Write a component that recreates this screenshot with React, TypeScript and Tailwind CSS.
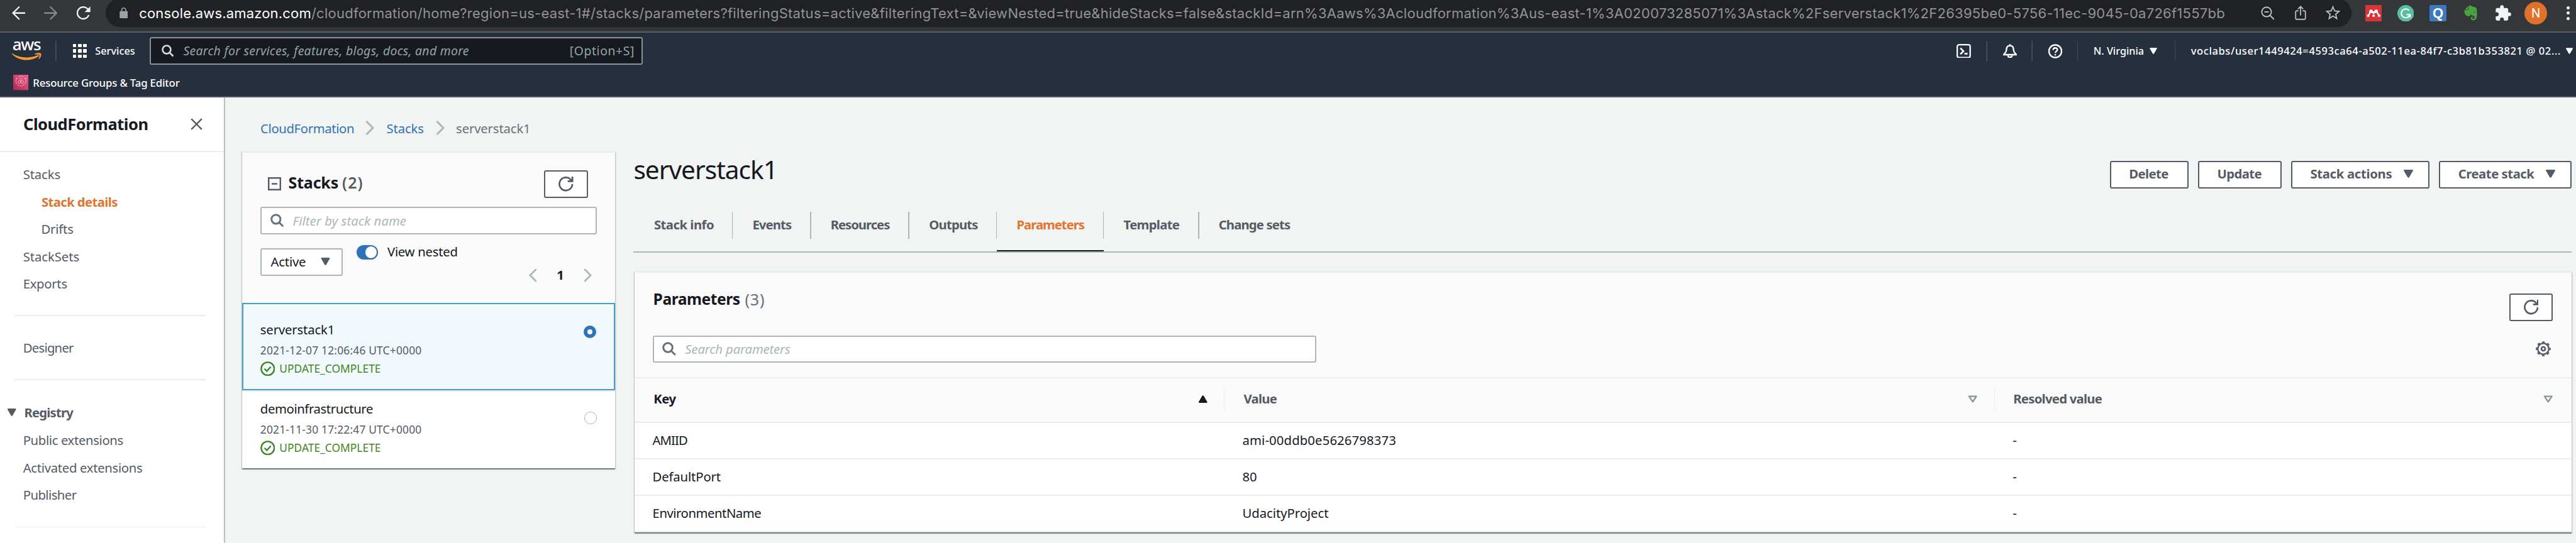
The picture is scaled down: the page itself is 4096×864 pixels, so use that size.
import type { ReactNode } from "react";
import { FaEvernote } from "react-icons/fa";
import { MdExtension, MdStarBorder } from "react-icons/md";

const URL_PATH =
  "/cloudformation/home?region=us-east-1#/stacks/parameters?filteringStatus=active&filteringText=&viewNested=true&hideStacks=false&stackId=arn%3Aaws%3Acloudformation%3Aus-east-1%3A020073285071%3Astack%2Fserverstack1%2F26395be0-5756-11ec-9045-0a726f1557bb";

function Caret({ className }: { className: string }) {
  return (
    <svg viewBox="0 0 16 14" className={className} fill="currentColor">
      <path d="M1.5 0h13c1.2 0 1.9 1 1.3 2l-6.4 11c-.6 1-2.200 1-2.800 0L.2 2C-.4 1 .3 0 1.500 0z" />
    </svg>
  );
}

function SearchIcon({ className }: { className: string }) {
  return (
    <svg viewBox="0 0 22 22" className={className} fill="none" stroke="currentColor" strokeWidth="3">
      <circle cx="9" cy="9" r="7.300" />
      <path d="M14.200 14.200l6.600 6.600" />
    </svg>
  );
}

function RefreshIcon({ className }: { className: string }) {
  return (
    <svg viewBox="0 0 28 28" className={className} fill="none" stroke="currentColor" strokeWidth="3.200">
      <path d="M26.300 14A12.300 12.300 0 1 1 23.500 6.200l2 2.300" />
      <path d="M26.400 0v8.700H17.600" />
    </svg>
  );
}

function Chevron({ className, flip = false }: { className: string; flip?: boolean }) {
  return (
    <svg viewBox="0 0 14 23" className={className} fill="none" stroke="currentColor" strokeWidth="3">
      {flip ? <path d="M12.500 1L2 11.500 12.500 22" /> : <path d="M1.500 1L12 11.500 1.500 22" />}
    </svg>
  );
}

function BrowserBar() {
  return (
    <div className="flex h-[52px] w-full items-start overflow-hidden border-b-2 border-[#5f6064] bg-[#35363a]">
      <div className="-mt-[1.6px] flex h-[45px] w-full shrink-0 items-center">
        <svg viewBox="0 0 26 26" className="ml-[18.500px] size-[21.500px] shrink-0" fill="none" stroke="#f1f3f4" strokeWidth="2.800" strokeLinecap="round">
          <path d="M25 13H2M13.500 1.500L2 13l11.500 11.500" />
        </svg>
        <svg viewBox="0 0 26 26" className="ml-[30px] size-[21.500px] shrink-0" fill="none" stroke="#87888b" strokeWidth="2.800" strokeLinecap="round">
          <path d="M1 13h23M12.500 1.500L24 13 12.500 24.500" />
        </svg>
        <svg viewBox="0 0 28 27" className="ml-[30px] h-[21.500px] w-[22px] shrink-0">
          <path d="M24.500 17.500A12 12 0 1 1 22.500 5.500" fill="none" stroke="#f1f3f4" strokeWidth="2.900" />
          <path d="M27.500 0v11.500H16z" fill="#f1f3f4" />
        </svg>
        <div className="ml-[24.200px] flex h-[45px] w-[3571px] shrink-0 items-center rounded-full bg-[#202124]">
          <svg viewBox="0 0 16 21" className="ml-[22px] h-[17px] w-[13.500px] shrink-0">
            <path d="M4 8V5a4 4 0 0 1 8 0v3" fill="none" stroke="#9aa0a6" strokeWidth="2" />
            <rect x="0" y="7" width="16" height="14" rx="1.800" fill="#9aa0a6" />
          </svg>
          <div className="ml-[18px] flex w-[3362px] shrink-0 whitespace-nowrap font-['Inter',sans-serif] text-[22px] leading-[28px] tracking-[0.255px] text-white">
            <span className="tracking-[0.180px]">console.aws.amazon.com</span>
            <span className="text-[#929395]">{URL_PATH}</span>
          </div>
          <svg viewBox="0 0 27 27" className="ml-[12px] size-[22px] shrink-0" fill="none" stroke="#b9babc" strokeWidth="2.500">
            <circle cx="11" cy="11" r="9.300" />
            <path d="M17.500 17.500l8 8M6.800 11h8.400" />
          </svg>
          <svg viewBox="0 0 22 28" className="ml-[32px] h-[23px] w-[18px] shrink-0" fill="none" stroke="#b9babc" strokeWidth="2.300">
            <path d="M7 10H3.500A2 2 0 0 0 1.500 12v12.500a2 2 0 0 0 2 2h15a2 2 0 0 0 2-2V12a2 2 0 0 0-2-2H15M11 19V2M6 6.500L11 1.500l5 5" />
          </svg>
          <MdStarBorder className="ml-[27.500px] size-[29px] shrink-0 text-[#b9babc]" />
        </div>
        <svg viewBox="0 0 32 32" className="ml-[22px] size-[26.500px] shrink-0">
          <rect width="32" height="32" fill="#d63638" />
          <g fill="#fff">
            <circle cx="11" cy="12" r="3.300" />
            <circle cx="21" cy="12" r="3.300" />
            <circle cx="16" cy="14.500" r="2.600" />
            <circle cx="5.500" cy="20.500" r="2.500" />
            <circle cx="16" cy="20.500" r="2.500" />
            <circle cx="26.500" cy="20.500" r="2.500" />
          </g>
          <path d="M9.500 12Q9 17 5.500 20M11 13l5 2 5-2M22.500 12q.5 5 4 8" fill="none" stroke="#fff" strokeWidth="2.600" />
        </svg>
        <svg viewBox="0 0 32 32" className="ml-[24.500px] size-[26.500px] shrink-0">
          <circle cx="16" cy="16" r="16" fill="#58c09b" />
          <path d="M22.500 10.500A8.500 8.500 0 1 0 23.500 20M17.500 18.500h7v5.500" fill="none" stroke="#fff" strokeWidth="2.500" />
        </svg>
        <div className="ml-[25px] flex size-[26.500px] shrink-0 items-center justify-center rounded-[2px] bg-[#3d7abd] font-['Liberation_Sans',sans-serif] text-[22px] leading-none font-bold text-white">
          Q
        </div>
        <FaEvernote className="ml-[25px] h-[27px] w-[27px] shrink-0 text-[#4aa33e]" />
        <MdExtension className="ml-[24px] size-[28px] shrink-0 text-[#f1f3f4]" />
        <div className="ml-[20.500px] flex size-[36px] shrink-0 items-center justify-center rounded-full bg-[#e0712a] font-['Roboto',sans-serif] text-[20px] leading-none text-white">
          N
        </div>
        <div className="ml-[30.500px] flex shrink-0 flex-col gap-[3.500px]">
          <span className="size-[5px] rounded-full bg-[#f1f3f4]" />
          <span className="size-[5px] rounded-full bg-[#f1f3f4]" />
          <span className="size-[5px] rounded-full bg-[#f1f3f4]" />
        </div>
      </div>
    </div>
  );
}

function NavDivider({ className }: { className: string }) {
  return <span className={`h-[32px] w-[1.500px] shrink-0 bg-[#434a54] ${className}`} />;
}

function ConsoleNav() {
  return (
    <div className="h-[103px] w-full border-b-2 border-[#545b64] bg-[#262f3e] font-medium text-white">
      <div className="flex h-[58px] items-center">
        <div className="ml-[18.500px] flex w-[47px] shrink-0 flex-col items-center">
          <span className="h-[17px] text-[26px] leading-[7px] tracking-[-1.300px]">aws</span>
          <svg viewBox="0 0 175 44" className="h-[12px] w-[47px]" fill="#f59b35">
            <path d="M1 3C50 32 105 34 154 14c6-2 9 2 4 6C112 54 42 50 1 8c-3-3-2-6 0-5z" />
            <path d="M136 6c12-7 32-7 36-2 4 6-1 24-11 32-2 1-4 0-3-2 4-9 7-19 5-22-3-3-13-3-24-1-3 0-5-3-3-5z" />
          </svg>
        </div>
        <NavDivider className="ml-[22.500px]" />
        <div className="ml-[26px] grid w-[22.500px] shrink-0 grid-cols-3 gap-[2.700px]">
          {[0, 1, 2, 3, 4, 5, 6, 7, 8].map((n) => (
            <span key={n} className="h-[5.700px] rounded-[1px] bg-white" />
          ))}
        </div>
        <span className="ml-[13.300px] w-[65px] shrink-0 text-[16.300px]">Services</span>
        <div className="ml-[22.200px] flex h-[43.500px] w-[783.500px] shrink-0 items-center rounded-[3px] border-2 border-[#879596] bg-[#16191f] font-normal text-[#95a5a6]">
          <SearchIcon className="ml-[16.500px] size-[19.500px] shrink-0 text-[#d5dbdb]" />
          <span className="ml-[15px] grow text-[19.400px] tracking-[0.300px] italic">
            Search for services, features, blogs, docs, and more
          </span>
          <span className="mr-[11px] text-[19.400px] tracking-[0.590px]">[Option+S]</span>
        </div>
        <div className="grow" />
        <svg viewBox="0 0 28 28" className="size-[22.800px] shrink-0" fill="none" stroke="#fff" strokeWidth="2.800">
          <rect x="1.400" y="1.400" width="25.200" height="25.200" rx="3.500" />
          <path d="M7.500 8l6 6-6 6" strokeWidth="3.200" />
          <path d="M15.500 19h6" strokeWidth="3.400" />
        </svg>
        <NavDivider className="ml-[24px]" />
        <svg viewBox="0 0 30 28" className="ml-[24px] h-[22.800px] w-[24px] shrink-0" fill="none" stroke="#fff" strokeWidth="3" strokeLinejoin="round">
          <path d="M15 3c-5 0-7 3.500-7 8 0 5-2.500 6-5.500 10h25C24.500 17 22 16 22 11c0-4.500-2-8-7-8z" />
          <path d="M15 0v4M11 22.500c0 5 8 5 8 0" />
        </svg>
        <NavDivider className="ml-[22.500px]" />
        <svg viewBox="0 0 30 28" className="ml-[24.500px] h-[23px] w-[24px] shrink-0" fill="none" stroke="#fff" strokeWidth="2.900">
          <circle cx="15" cy="14" r="12.500" />
          <path d="M10.800 11.500c0-5.500 8.400-5.200 8.400-.5 0 3.200-4.200 3-4.200 6.500M15 19.500v3" />
        </svg>
        <NavDivider className="ml-[22.500px]" />
        <span className="ml-[24.500px] w-[82px] shrink-0 text-[16.200px] whitespace-nowrap">N. Virginia</span>
        <Caret className="ml-[7.500px] h-[10px] w-[12px] shrink-0" />
        <NavDivider className="ml-[27.500px]" />
        <span className="ml-[24.500px] w-[586.500px] shrink-0 text-[16.500px] tracking-[0.600px] whitespace-nowrap">
          voclabs/user1449424=4593ca64-a502-11ea-84f7-c3b81b353821 @ 02...
        </span>
        <Caret className="mr-[5.300px] ml-[9.500px] h-[10px] w-[11px] shrink-0" />
      </div>
      <div className="flex h-[43px] items-center">
        <svg viewBox="0 0 30 30" className="ml-[20.700px] size-[24.300px]">
          <defs>
            <linearGradient id="rg" x1="0" y1="1" x2="1" y2="0">
              <stop offset="0" stopColor="#b0264f" />
              <stop offset="1" stopColor="#f0608f" />
            </linearGradient>
          </defs>
          <rect width="30" height="30" fill="url(#rg)" />
          <g fill="none" stroke="#f7c3d4" strokeWidth=".9">
            <path d="M7 6.500A9.600 9.600 0 0 0 13 21.500l2 1.500 2-1.500A9.600 9.600 0 0 0 23 6.500M10 4.200a9.600 9.600 0 0 1 10 0" />
            <circle cx="15" cy="9.500" r="2.500" />
            <circle cx="12" cy="14.500" r="2.600" />
            <circle cx="18" cy="14.500" r="2.600" />
            <circle cx="7" cy="7" r="1" />
            <circle cx="23.500" cy="7" r="1" />
          </g>
        </svg>
        <span className="ml-[7.300px] text-[16.800px] tracking-[-0.170px]">Resource Groups &amp; Tag Editor</span>
      </div>
    </div>
  );
}

function NavItem({ children, className = "" }: { children: ReactNode; className?: string }) {
  return <div className={`h-[43.500px] pl-[36.700px] text-[20.300px] leading-[43.500px] ${className}`}>{children}</div>;
}

function SideRule({ className }: { className: string }) {
  return <div className={`ml-[22.600px] h-[1.600px] w-[304.500px] bg-[#eaeded] ${className}`} />;
}

function Sidebar() {
  return (
    <aside className="z-10 h-full w-[356.300px] shrink-0 bg-white text-[#545b64] shadow-[1px_0_2px_rgba(0,28,36,0.45)]">
      <div className="flex h-[86.500px] items-center border-b-2 border-[#eaeded] pl-[37px]">
        <span className="w-[266px] text-[25.500px] font-bold tracking-[-0.480px] text-[#16191f]">CloudFormation</span>
        <svg viewBox="0 0 24 24" className="size-[19px]" fill="none" stroke="currentColor" strokeWidth="3">
          <path d="M1.500 1.500l21 21M22.500 1.500l-21 21" />
        </svg>
      </div>
      <nav className="pt-[14.500px]">
        <NavItem className="tracking-[-0.140px]">Stacks</NavItem>
        <NavItem className="pl-[66px] font-bold tracking-[-0.600px] text-[#e0752f]">Stack details</NavItem>
        <NavItem className="pl-[65.500px] tracking-[-0.200px]">Drifts</NavItem>
        <NavItem className="tracking-[-0.060px]">StackSets</NavItem>
        <NavItem className="tracking-[-0.290px]">Exports</NavItem>
        <SideRule className="mt-[27.500px] mb-[29px]" />
        <NavItem className="tracking-[-0.750px]">Designer</NavItem>
        <SideRule className="mt-[28px] mb-[30px]" />
        <div className="mb-px flex h-[43.500px] items-center">
          <Caret className="ml-[11px] h-[12px] w-[15.500px]" />
          <span className="ml-[12px] text-[20.300px] font-bold tracking-[-0.810px]">Registry</span>
        </div>
        <NavItem className="tracking-[-0.360px]">Public extensions</NavItem>
        <NavItem className="tracking-[-0.310px]">Activated extensions</NavItem>
        <NavItem className="tracking-[-0.550px]">Publisher</NavItem>
        <SideRule className="mt-[28px]" />
      </nav>
    </aside>
  );
}

function RefreshButton({ className = "" }: { className?: string }) {
  return (
    <button className={`flex h-[43.500px] w-[69.500px] shrink-0 items-center justify-center rounded-[3px] border-2 border-[#545b64] bg-white text-[#545b64] ${className}`}>
      <RefreshIcon className="size-[23.500px]" />
    </button>
  );
}

function StackEntry({ name, nameClass, date, className, radio }: { name: string; nameClass: string; date: string; className: string; radio: ReactNode }) {
  return (
    <div className={`flex justify-between ${className}`}>
      <div>
        <div className={`h-[34px] text-[20.300px] leading-[34px] text-[#16191f] ${nameClass}`}>{name}</div>
        <div className="h-[32px] text-[17.400px] leading-[32px] tracking-[0.180px] text-[#545b64]">{date}</div>
        <div className="flex h-[27px] items-center text-[17.400px] text-[#3f8624]">
          <svg viewBox="0 0 29 29" className="size-[23.500px]" fill="none" stroke="currentColor" strokeWidth="3">
            <circle cx="14.500" cy="14.500" r="12.800" />
            <path d="M8 14.500l4.700 4.700L20.500 10.500" />
          </svg>
          <span className="ml-[7px]">UPDATE_COMPLETE</span>
        </div>
      </div>
      {radio}
    </div>
  );
}

const CARD_SHADOW =
  "shadow-[0_2px_1px_rgba(0,28,36,0.42),1px_1px_2px_rgba(0,28,36,0.2),-1px_1px_2px_rgba(0,28,36,0.2)]";

function StackPanel() {
  return (
    <section className="ml-[29px] w-[592.700px] shrink-0">
      <div className="flex h-[86px] items-center pt-[11px] pl-[28.800px] text-[20.300px] leading-[28px]">
        <span className="w-[167px] tracking-[-0.370px] text-[#2e73b8]">CloudFormation</span>
        <Chevron className="h-[23px] w-[14px] text-[#aab7b8]" />
        <span className="ml-[19.500px] w-[78px] tracking-[-0.140px] text-[#2e73b8]">Stacks</span>
        <Chevron className="h-[23px] w-[14px] text-[#aab7b8]" />
        <span className="ml-[18.500px] tracking-[-0.150px] text-[#687078]">serverstack1</span>
      </div>
      <div className={`border-t-2 border-[#eaeded] bg-white ${CARD_SHADOW}`}>
        <div className="h-[239px] bg-[#fafafa] px-[28.900px] pt-[28px]">
          <div className="flex h-[43.500px] items-center pr-[14.400px] pl-[11.400px]">
            <svg viewBox="0 0 26 26" className="size-[21px]" fill="none" stroke="#545b64" strokeWidth="3">
              <rect x="1.500" y="1.500" width="23" height="23" />
              <path d="M7.500 13h11" />
            </svg>
            <span className="ml-[12px] w-[85.500px] pb-[4px] text-[25px] font-bold tracking-[-0.180px] text-[#16191f]">Stacks</span>
            <span className="grow pb-[4px] text-[25px] font-semibold tracking-[1px] text-[#545b64]">(2)</span>
            <RefreshButton />
          </div>
          <div className="mt-[14.500px] flex h-[43.500px] items-center rounded-[3px] border-2 border-[#aab7b8] bg-white">
            <SearchIcon className="ml-[13.700px] size-[21.500px] text-[#687078]" />
            <span className="ml-[14px] text-[20.300px] tracking-[0.080px] text-[#aab7b8] italic">Filter by stack name</span>
          </div>
          <div className="mt-[22.500px] flex items-start text-[#16191f]">
            <div className="flex h-[43.500px] w-[130.500px] items-center rounded-[3px] border-2 border-[#aab7b8] bg-white pr-[18px] pb-[2px] pl-[14.400px]">
              <span className="grow text-[20.300px] tracking-[-0.230px]">Active</span>
              <Caret className="h-[12px] w-[15px] text-[#545b64]" />
            </div>
            <div className="-mt-[5.500px] ml-[22.600px] flex h-[23px] items-center">
              <span className="flex h-[23px] w-[33.700px] justify-end rounded-full bg-[#2e73b8] pt-[2.500px] pr-[1.700px]">
                <span className="size-[18.500px] rounded-full bg-white shadow-[1px_1px_1px_rgba(0,0,0,0.25)]" />
              </span>
              <span className="ml-[15px] pb-[2px] text-[20.300px] tracking-[-0.260px]">View nested</span>
            </div>
            <div className="mt-[31.500px] mr-[8px] ml-auto flex h-[23px] items-center">
              <Chevron flip className="h-[22px] w-[13px] text-[#aab7b8]" />
              <span className="w-[74px] pb-[2px] text-center text-[20.300px] font-bold">1</span>
              <Chevron className="h-[22px] w-[13px] text-[#aab7b8]" />
            </div>
          </div>
        </div>
        <StackEntry
          name="serverstack1"
          nameClass="tracking-[-0.150px]"
          date="2021-12-07 12:06:46 UTC+0000"
          className="h-[139px] border-2 border-[#449fc8] bg-[#f2f9fd] pt-[23px] pr-[28.200px] pl-[26.500px]"
          radio={
            <span className="mt-[10.500px] flex size-[20px] items-center justify-center rounded-full bg-[#2e73b8]">
              <span className="size-[8px] rounded-full bg-white" />
            </span>
          }
        />
        <StackEntry
          name="demoinfrastructure"
          nameClass="tracking-[-0.390px]"
          date="2021-11-30 17:22:47 UTC+0000"
          className="h-[124px] border-t-2 border-[#eaeded] bg-white pt-[10px] pr-[28.900px] pl-[28.500px]"
          radio={<span className="mt-[22px] size-[20px] rounded-full border-[1.500px] border-[#aab7b8]" />}
        />
      </div>
    </section>
  );
}

const TABS = [
  { label: "Stack info", box: "w-[158px]", text: "pl-[32.500px] tracking-[-0.500px]" },
  { label: "Events", box: "w-[124.300px]", text: "pl-[31px] tracking-[-0.870px]" },
  { label: "Resources", box: "w-[156.200px]", text: "pl-[31px] tracking-[-1.020px]" },
  { label: "Outputs", box: "w-[139.200px]", text: "pl-[31.500px] tracking-[-0.810px]" },
  { label: "Parameters", box: "w-[170px]", text: "pl-[31.500px] tracking-[-1.020px]", active: true },
  { label: "Template", box: "w-[151.600px]", text: "pl-[31.500px] tracking-[-0.670px]" },
  { label: "Change sets", box: "w-[160px]", text: "pl-[31px] tracking-[-0.850px]" },
];

const ROWS = [
  { key: "AMIID", k: "tracking-[-0.900px]", value: "ami-00ddb0e5626798373", v: "tracking-[0.130px]" },
  { key: "DefaultPort", k: "tracking-[-0.140px]", value: "80", v: "" },
  { key: "EnvironmentName", k: "tracking-[-0.460px]", value: "UdacityProject", v: "tracking-[-0.040px]" },
];

function ActionButton({ children, className, caret = false }: { children: string; className: string; caret?: boolean }) {
  return (
    <button className={`flex h-[43.700px] shrink-0 items-center rounded-[3px] border-2 border-[#545b64] bg-white pb-[3px] pl-[28.500px] text-[20.300px] font-bold text-[#545b64] ${className}`}>
      {children}
      {caret && <Caret className="mr-[24.500px] ml-auto h-[13px] w-[15px]" />}
    </button>
  );
}

function SortIcon() {
  return (
    <svg viewBox="0 0 16 12" className="h-[12px] w-[15.500px]" fill="none" stroke="#879596" strokeWidth="2.400" strokeLinejoin="round">
      <path d="M2 1.400h12L8 10.500z" />
    </svg>
  );
}

function Details() {
  return (
    <section className="ml-[29.400px] w-[3082px] shrink-0 pt-[101px]">
      <div className="flex h-[44px] items-start">
        <h1 className="grow text-[40.600px] leading-[28px] tracking-[-1px] text-[#16191f]">serverstack1</h1>
        <div className="flex gap-[14.800px]">
          <ActionButton className="w-[125.500px] tracking-[-0.580px]">Delete</ActionButton>
          <ActionButton className="w-[133px] tracking-[-0.600px]">Update</ActionButton>
          <ActionButton caret className="w-[220.500px] tracking-[-0.310px]">Stack actions</ActionButton>
          <ActionButton caret className="w-[211.200px] tracking-[-0.460px]">Create stack</ActionButton>
        </div>
      </div>
      <div className="mt-[36.700px] flex h-[65px] border-b-2 border-[#aab7b8]">
        {TABS.map((tab, i) => (
          <div
            key={tab.label}
            className={`flex shrink-0 items-start ${tab.box} ${tab.active ? "border-b-2 border-[#16191f] text-[#e0752f]" : "text-[#545b64]"}`}
          >
            <span className={`h-[43.500px] grow text-[20.300px] leading-[40px] font-bold ${tab.text}`}>{tab.label}</span>
            {i < TABS.length - 1 && <span className="h-[43.700px] w-[1.500px] bg-[#aab7b8]" />}
          </div>
        ))}
      </div>
      <div className={`mt-[30.300px] ml-[1.400px] w-[3080px] border-t-2 border-[#eaeded] bg-white ${CARD_SHADOW}`}>
        <div className="h-[168px] border-b-2 border-[#eaeded] bg-[#fafafa] pt-[33.500px] pr-[29.700px] pl-[28.800px]">
          <div className="flex items-start leading-[18px]">
            <span className="w-[147px] pl-px text-[24.600px] font-bold tracking-[-0.460px] text-[#16191f]">Parameters</span>
            <span className="grow text-[25px] leading-[18px] tracking-[0.800px] text-[#687078]">(3)</span>
            <RefreshButton />
          </div>
          <div className="mt-[22.700px] flex items-center justify-between">
            <div className="flex h-[43.500px] w-[1055.300px] items-center rounded-[3px] border-2 border-[#aab7b8] bg-white">
              <SearchIcon className="ml-[13.800px] size-[22px] text-[#687078]" />
              <span className="ml-[14px] text-[20.300px] tracking-[-0.150px] text-[#aab7b8] italic">Search parameters</span>
            </div>
            <svg viewBox="0 0 30 30" className="mr-[3px] size-[24px]" fill="none" stroke="#545b64">
              <circle cx="15" cy="15" r="11" strokeWidth="3" />
              <circle cx="15" cy="15" r="13.300" strokeWidth="3" strokeDasharray="5.220 5.220" strokeDashoffset="2.610" />
              <circle cx="15" cy="15" r="3.800" strokeWidth="3.200" />
            </svg>
          </div>
        </div>
        <div className="flex h-[71px] items-center border-b-2 border-[#eaeded] bg-[#fafafa] pb-[3px] text-[20.300px] font-bold text-[#545b64]">
          <div className="flex h-[35.500px] w-[938.700px] items-center border-r-[1.500px] border-[#eaeded] pr-[26px] pl-[30.500px]">
            <span className="grow pb-[2px] tracking-[-0.500px] text-[#16191f]">Key</span>
            <Caret className="h-[12px] w-[15.500px] rotate-180 text-[#16191f]" />
          </div>
          <div className="flex h-[35.500px] w-[1224.800px] items-center border-r-[1.500px] border-[#eaeded] pr-[27px] pl-[30px]">
            <span className="grow pb-[2px] tracking-[-0.740px]">Value</span>
            <SortIcon />
          </div>
          <div className="flex h-[35.500px] grow items-center pr-[29px] pl-[29px]">
            <span className="grow pb-[2px] tracking-[-0.730px]">Resolved value</span>
            <SortIcon />
          </div>
        </div>
        {ROWS.map((row) => (
          <div key={row.key} className="flex h-[58.100px] items-center border-b-2 border-[#eaeded] pb-[2px] text-[20.300px] text-[#16191f]">
            <span className={`w-[938.700px] pl-[28.800px] ${row.k}`}>{row.key}</span>
            <span className={`w-[1224.800px] pl-[28px] ${row.v}`}>{row.value}</span>
            <span className="pl-[28px]">-</span>
          </div>
        ))}
      </div>
    </section>
  );
}

export default function App() {
  return (
    <div className="flex h-[864px] w-[4096px] flex-col overflow-hidden bg-[#f2f3f3] font-['Noto_Sans',sans-serif]">
      <BrowserBar />
      <ConsoleNav />
      <div className="flex min-h-0 grow">
        <Sidebar />
        <StackPanel />
        <Details />
      </div>
    </div>
  );
}
